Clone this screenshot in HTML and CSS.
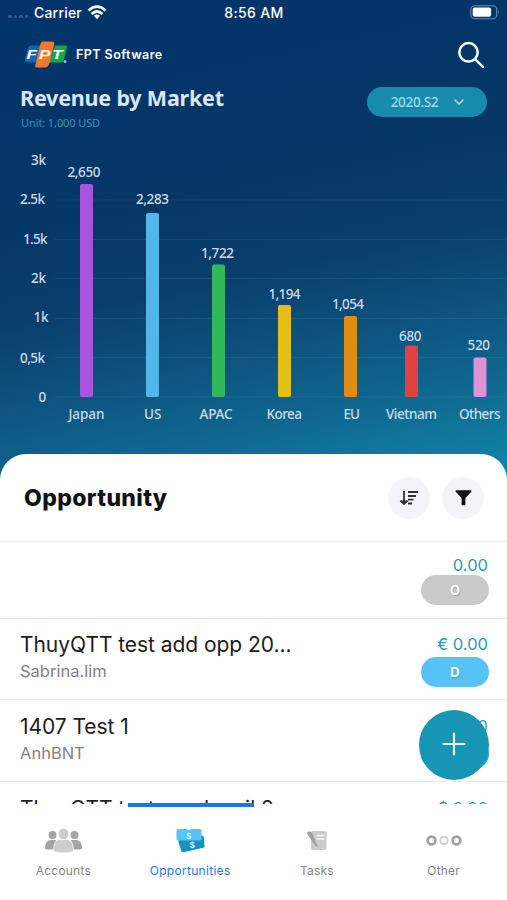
FILE: index.html
```html
<!DOCTYPE html>
<html lang="en">
<head>
<meta charset="utf-8">
<title>FPT Software – Opportunities</title>
<link rel="stylesheet" href="styles.css">
</head>
<body>
<div class="app">
  <header class="hero">
    <div class="status">
      <div class="carrier">
        <span class="signal"><i></i><i></i><i></i><i></i></span>
        <span class="carrier-name">Carrier</span>
        <svg class="wifi" width="20" height="15" viewBox="0 0 20 15" fill="none" stroke="#fff" stroke-width="2.7">
          <path d="M1.500 5.600Q10-2.200 18.500 5.600M4.600 9Q10 4 15.400 9"/>
          <path d="M6.900 10.800Q10 8.400 13.100 10.800L10 14.200Z" fill="#fff" stroke="none"/>
        </svg>
      </div>
      <span class="time">8:56 AM</span>
      <svg class="battery" width="30" height="15" viewBox="0 0 30 15">
        <rect x=".7" y=".7" width="26" height="13" rx="4" fill="none" stroke="#6f8bab" stroke-width="1.100"/>
        <rect x="2.700" y="2.600" width="18.400" height="9.200" rx="2" fill="#fff"/>
        <path d="M28 5.200q1.600 2 0 4z" fill="#8fa5bf"/>
      </svg>
    </div>
    <div class="brand-row">
      <svg class="logo" width="44" height="28" viewBox="0 0 44 28">
        <path d="M7 4.500h10L12.500 21.500H3.500Q0 21.500 1 18L4 7Q4.700 4.500 7 4.500z" fill="#1267b1"/>
        <path d="M31 4.500h10.500Q43.500 4.500 42.800 7L40 18.500Q39.200 21.500 36 21.500H25z" fill="#10a84b"/>
        <path d="M19 .5h9q3 0 2.300 3L25.500 22Q24.200 26.500 20 26.500h-7.500q-1.800 0-1.200-2L16 4.500Q17 .5 19 .5z" fill="#f4772c"/>
        <g class="logo-text"><text x="2.500" y="18" textLength="10.500" lengthAdjust="spacingAndGlyphs">F</text><text x="15" y="18" textLength="11.500" lengthAdjust="spacingAndGlyphs">P</text><text x="28" y="18" textLength="10.500" lengthAdjust="spacingAndGlyphs">T</text></g>
        <circle cx="41" cy="20.500" r="1.500" fill="#9fb7d2"/>
      </svg>
      <span class="brand">FPT Software</span>
      <svg class="search" width="28" height="28" viewBox="0 0 28 28" fill="none" stroke="#fff" stroke-width="2.500" stroke-linecap="round"><circle cx="11.500" cy="11.300" r="9.200"/><path d="M18.300 18.300L26 25.800"/></svg>
    </div>
    <div class="chart-head">
      <div>
        <h1>Revenue by Market</h1>
        <p class="unit">Unit: 1,000 USD</p>
      </div>
      <button class="period"><span>2020.S2</span><svg width="12" height="8" viewBox="0 0 12 8" fill="none" stroke="#a8d8e6" stroke-width="1.600"><path d="M1.500 1.500L6 6l4.500-4.500"/></svg></button>
    </div>
    <svg class="chart" width="507" height="290" viewBox="0 140 507 290">
      <path class="grid" d="M55 200H507M55 239.500H507M55 278.500H507M55 318.500H507M55 357.500H507M55 397H507"/>
      <g class="axis">
        <text x="31" y="165" textLength="15">3k</text>
        <text x="20" y="204" textLength="25">2.5k</text>
        <text x="23" y="244" textLength="24.500">1.5k</text>
        <text x="31" y="283" textLength="15">2k</text>
        <text x="33.500" y="322" textLength="15">1k</text>
        <text x="20" y="362.500" textLength="25">0,5k</text>
        <text x="38.500" y="401.500" textLength="8">0</text>
      </g>
      <rect x="80" y="184" width="13" height="213" rx="2" fill="#a755dd"/>
      <rect x="146" y="213" width="13" height="184" rx="2" fill="#50b7e9"/>
      <rect x="212" y="264.500" width="13" height="132.500" rx="2" fill="#30b85a"/>
      <rect x="278" y="305" width="13" height="92" rx="2" fill="#e3bf18"/>
      <rect x="344" y="316" width="13" height="81" rx="2" fill="#e18d14"/>
      <rect x="405" y="345.500" width="13" height="51.500" rx="2" fill="#e2413d"/>
      <rect x="473.500" y="357.500" width="13" height="39.500" rx="2" fill="#de92d9"/>
      <g class="values">
        <text x="67.500" y="177" textLength="33">2,650</text>
        <text x="136" y="204" textLength="33">2,283</text>
        <text x="201" y="258" textLength="33">1,722</text>
        <text x="268.500" y="299" textLength="32">1,194</text>
        <text x="332" y="309" textLength="32">1,054</text>
        <text x="399" y="341" textLength="22.500">680</text>
        <text x="467.500" y="349.500" textLength="22.500">520</text>
      </g>
      <g class="names">
        <text x="68.500" y="418.500" textLength="36">Japan</text>
        <text x="144" y="418.500" textLength="17.500">US</text>
        <text x="199.500" y="418.500" textLength="33">APAC</text>
        <text x="266.500" y="418.500" textLength="35.500">Korea</text>
        <text x="343.500" y="418.500" textLength="16.500">EU</text>
        <text x="386" y="418.500" textLength="51">Vietnam</text>
        <text x="459" y="418.500" textLength="41.500">Others</text>
      </g>
    </svg>
  </header>

  <main class="panel">
    <div class="panel-head">
      <h2>Opportunity</h2>
      <button class="round"><svg width="20" height="16" viewBox="0 0 20 16" fill="none" stroke="#303236" stroke-width="1.800"><path d="M5 1v12M1.300 10.700L5 14l3.700-3.300"/><path d="M1.800 10.500h6.400L5 14z" fill="#303236" stroke="none"/><path d="M9 2h10M9 6h8M9 9.700h5.500M9 13.500h4"/></svg></button>
      <button class="round"><svg width="17" height="16" viewBox="0 0 17 16"><path d="M.5 1q0-.7.7-.7h14.600q.7 0 .7.700 0 .5-.4.900L10.400 8v6.500q0 .8-.8.800H7.400q-.8 0-.8-.8V8L.9 1.900Q.5 1.500.5 1z" fill="#111216"/></svg></button>
    </div>
    <div class="list">
      <article class="row first">
        <div class="info"></div>
        <div class="side"><span class="amount">0.00</span><span class="pill gray">O</span></div>
      </article>
      <article class="row">
        <div class="info"><h3>ThuyQTT test add opp 20...</h3><p>Sabrina.lim</p></div>
        <div class="side"><span class="amount">€ 0.00</span><span class="pill blue">D</span></div>
      </article>
      <article class="row third">
        <div class="info"><h3>1407 Test 1</h3><p>AnhBNT</p></div>
        <div class="side"><span class="amount">0.00</span><span class="pill teal">D</span></div>
      </article>
      <article class="row last">
        <div class="info"><h3>ThuyQTT test send mail 2</h3></div>
        <div class="side"><span class="amount">$ 0.00</span></div>
      </article>
    </div>
    <button class="fab"><svg width="24" height="24" viewBox="0 0 24 24" stroke="#e9fbff" stroke-width="2.200" stroke-linecap="round"><path d="M12 1.500v21M1.500 12h21"/></svg></button>
  </main>

  <nav class="tabs">
    <a class="tab">
      <svg width="38" height="28" viewBox="0 0 38 28">
        <g fill="#a5a5a5"><circle cx="8.500" cy="9" r="4"/><circle cx="30.500" cy="9" r="4"/><path d="M1 22.500Q1 14 7 14h5l-2.500 9.500H3Q1 23.500 1 22.500zM38 22.500Q38 14 32 14h-5l2.500 9.500H36q2 0 2-1z"/></g>
        <g fill="#cdcdcd" stroke="#fff" stroke-width=".7"><ellipse cx="19.500" cy="8" rx="5.300" ry="5.800"/><path d="M9.700 24.500q0-11 6-11h7.600q6 0 6 11-1 2.300-9.800 2.300T9.700 24.500z"/></g>
      </svg><span>Accounts</span>
    </a>
    <a class="tab active">
      <svg width="30" height="28" viewBox="0 0 30 28">
        <path d="M3 14.500L27 9.500q1.500 0 1.800 1.500l.8 9.500q0 1-1.100 1.300L8.500 26.300q-1.800.2-2.200-1.300z" fill="#1795b8"/>
        <path d="M3 3h8l3 1 3-1h8q1.500 0 1.500 1.500V13q0 1.500-1.500 1.500H3Q1.500 14.500 1.500 13V4.500Q1.500 3 3 3z" fill="#55c4f7"/>
        <g class="money"><text x="14" y="12.500" text-anchor="middle">$</text><text x="17.500" y="21.500" text-anchor="middle">$</text></g>
      </svg><span>Opportunities</span>
    </a>
    <a class="tab">
      <svg width="22" height="28" viewBox="0 0 22 28">
        <path d="M7 5h11.500Q21 5 21 7.500V11h-.5v10.500q0 2.500-2.500 2.500H7.500Q5 24 5 21.500V7q0-2 2-2z" fill="#cbcbcb"/>
        <path d="M10.500 9.500h8M10.500 13h8" stroke="#f5f5f5" stroke-width="1.300"/>
        <path d="M1 7.500q0-2 2-2l2.500.5 6.500 15-3-1.500z" fill="#a0a0a0"/>
      </svg><span>Tasks</span>
    </a>
    <a class="tab">
      <svg width="36" height="28" viewBox="0 0 36 28" fill="none" stroke-width="2.600"><circle cx="5.500" cy="14.500" r="3.900" stroke="#a0a0a0"/><circle cx="18" cy="14.500" r="3.700" stroke="#cecece" stroke-width="2"/><circle cx="30.500" cy="14.500" r="3.900" stroke="#a0a0a0"/></svg><span>Other</span>
    </a>
  </nav>
</div>
</body>
</html>
```
FILE: styles.css
```css
* { box-sizing: border-box; }
body, h1, h2, h3, p { margin: 0; }
body { width: 507px; height: 900px; overflow: hidden; background: #fff; font-family: Inter, "Liberation Sans", sans-serif; }
button { border: 0; padding: 0; display: flex; align-items: center; justify-content: center; font: inherit; }
.app { height: 900px; display: flex; flex-direction: column; }

.hero { height: 480px; flex: none; color: #fff; background: linear-gradient(168deg, #02346b 0%, #053767 40%, #0a3f6c 56%, #0d547f 70%, #0f6890 83%, #1183a5 97%); }
.status { height: 28px; padding: 0 7px 3px 8px; display: grid; grid-template-columns: 1fr auto 1fr; align-items: center; font-size: 14px; font-weight: 500; }
.carrier { display: flex; align-items: center; }
.signal { display: flex; gap: 2px; width: 26px; padding-top: 8px; }
.signal i { width: 3.500px; height: 3.500px; border-radius: 50%; background: #3b5f8b; }
.carrier-name { letter-spacing: .2px; }
.wifi { margin-left: 5px; }
.time { letter-spacing: .35px; }
.battery { justify-self: end; }
.brand-row { height: 56px; padding: 0 22px 3px 24px; display: flex; align-items: center; }
.logo-text { fill: #fff; font: italic 700 13.500px "Liberation Sans", sans-serif; }
.brand { flex: 1; margin-left: 8px; font-size: 12.500px; font-weight: 600; letter-spacing: .45px; }
.chart-head { height: 56px; padding: 0 20px; display: flex; justify-content: space-between; font-family: "Noto Sans", sans-serif; }
h1 { font-size: 21.500px; line-height: 28px; font-weight: 700; color: #d9e6f5; letter-spacing: -.2px; white-space: nowrap; }
.unit { font-size: 11px; line-height: 14px; margin-top: 4px; padding-left: 1px; color: #3f91bd; letter-spacing: -.1px; }
.period { width: 120px; height: 30px; margin-top: 3px; gap: 15px; border-radius: 15px; background: #178bab; color: #a8d8e6; font-size: 13.500px; font-weight: 500; letter-spacing: -.3px; padding-left: 2px; }
.chart { display: block; font-family: "Noto Sans", sans-serif; font-size: 13.500px; }
.grid { stroke: #6aa5c2; stroke-opacity: .14; fill: none; }
.axis, .values, .names { fill: #cbdbea; font-weight: 500; }

.panel { position: relative; height: 350px; margin-top: -26px; flex: none; background: #fff; border-radius: 26px 26px 0 0; overflow: hidden; }
.panel-head { height: 88px; padding: 0 23px 0 24px; display: flex; align-items: center; gap: 12px; border-bottom: 1px solid #edeff1; }
h2 { flex: 1; font-size: 23px; font-weight: 800; color: #111216; letter-spacing: .35px; padding-top: 1px; }
.round { width: 42px; height: 42px; border-radius: 50%; background: #f2f4f8; }
.row { height: 81.500px; padding: 12px 18px 0 20px; display: flex; justify-content: space-between; border-bottom: 1px solid #e9ebed; }
.row.first { height: 76.500px; padding-top: 10px; }
.row.third, .row.last { padding-top: 13px; }
.third p { margin-top: 1px; }
h3 { font-size: 21px; line-height: 28px; font-weight: 400; color: #1c1c1e; white-space: nowrap; letter-spacing: -.05px; }
.info p { font-size: 16.500px; line-height: 22px; margin-top: 1px; color: #828282; }
.side { display: flex; flex-direction: column; align-items: flex-end; }
.amount { font-size: 16.500px; line-height: 26px; color: #2a9ab5; margin-right: 1px; }
.first .amount { line-height: 26px; }
.pill { width: 68px; height: 30px; border-radius: 15px; display: flex; align-items: center; justify-content: center; color: #fff; font-size: 13px; font-weight: 700; text-shadow: 1px 1px 1px rgba(60,60,120,.3); }
.first .pill { margin-top: -3px; }
.gray { background: #cacaca; }
.blue { background: #57c2f8; }
.teal { background: #28a9c8; }
.fab { position: absolute; left: 419px; top: 256px; width: 70px; height: 70px; padding-bottom: 3px; border-radius: 50%; background: #1795b5; }

.tabs { height: 96px; display: grid; grid-template-columns: repeat(4, 1fr); background: #fff; }
.tab { position: relative; display: flex; flex-direction: column; align-items: center; padding-top: 22px; font-size: 12px; line-height: 16px; color: #858585; letter-spacing: .2px; }
.tab span { margin-top: 9px; }
.tab.active { color: #2878ee; letter-spacing: .3px; }
.tab.active::before { content: ""; position: absolute; left: 1px; top: -1px; width: 126px; height: 4px; background: #1f74ea; }
.money { fill: #d8f6ff; font: 700 9px "Liberation Sans", sans-serif; }
```
